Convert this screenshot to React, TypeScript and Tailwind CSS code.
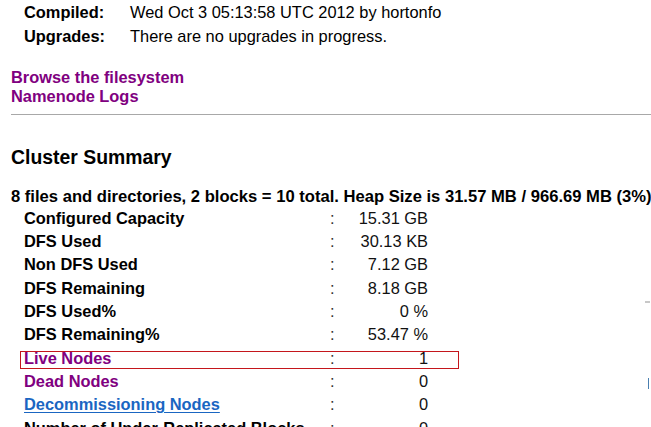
import React from 'react';

type Row = {
  label: string;
  value: string;
  kind?: 'visited' | 'link';
  boxed?: boolean;
};

const rows: Row[] = [
  { label: 'Configured Capacity', value: '15.31 GB' },
  { label: 'DFS Used', value: '30.13 KB' },
  { label: 'Non DFS Used', value: '7.12 GB' },
  { label: 'DFS Remaining', value: '8.18 GB' },
  { label: 'DFS Used%', value: '0 %' },
  { label: 'DFS Remaining%', value: '53.47 %' },
  { label: 'Live Nodes', value: '1', kind: 'visited', boxed: true },
  { label: 'Dead Nodes', value: '0', kind: 'visited' },
  { label: 'Decommissioning Nodes', value: '0', kind: 'link' },
  { label: 'Number of Under-Replicated Blocks', value: '0' },
];

const SummaryRow: React.FC<{ row: Row }> = ({ row }) => {
  const labelClass =
    row.kind === 'visited'
      ? 'text-[#800080]'
      : row.kind === 'link'
      ? 'text-[#1a66c2] underline underline-offset-2'
      : 'text-black';

  return (
    <div className="relative flex items-center h-[23.3px] whitespace-nowrap">
      {row.boxed && (
        <div className="absolute left-[-4px] top-[4.5px] w-[439px] h-[18px] border border-[#c4161c] pointer-events-none" />
      )}
      <span className={`w-[306px] font-bold ${labelClass}`}>{row.label}</span>
      <span className="w-[21px] text-[#333]">:</span>
      <span className="w-[77px] text-right text-[#111]">{row.value}</span>
    </div>
  );
};

export default function App() {
  return (
    <div
      className="relative w-[651px] h-[427px] overflow-hidden bg-white pl-[11px] text-[16.4px] text-black"
      style={{ fontFamily: '"Liberation Sans", Arial, sans-serif' }}
    >
      <div className="pl-[13px]">
        <div className="flex items-center h-[24px] whitespace-nowrap">
          <span className="w-[106px] font-bold">Compiled:</span>
          <span>Wed Oct 3 05:13:58 UTC 2012 by hortonfo</span>
        </div>
        <div className="flex items-center h-[24px] whitespace-nowrap">
          <span className="w-[106px] font-bold">Upgrades:</span>
          <span>There are no upgrades in progress.</span>
        </div>
      </div>

      <div className="mt-[19.5px] flex flex-col font-bold text-[#800080]">
        <a className="leading-[19px]">Browse the filesystem</a>
        <a className="leading-[19px]">Namenode Logs</a>
      </div>

      <div className="mt-[8px] border-t border-[#a8a8a8]" />

      <h2 className="mt-[30px] font-bold text-[19.4px] leading-[24px]">Cluster Summary</h2>

      <div className="mt-[18px] font-bold text-[16.6px] leading-[20px] whitespace-nowrap">
        8 files and directories, 2 blocks = 10 total. Heap Size is 31.57 MB / 966.69 MB (3%)
      </div>

      <div className="pl-[13px]">
        {rows.map((r) => (
          <SummaryRow key={r.label} row={r} />
        ))}
      </div>

      <div className="absolute right-[1px] top-[301px] w-[5px] h-[2px] bg-[#c8c8c8]" />
      <div className="absolute right-[2px] top-[378px] w-[1px] h-[11px] bg-[#4a7fb0]" />
    </div>
  );
}
